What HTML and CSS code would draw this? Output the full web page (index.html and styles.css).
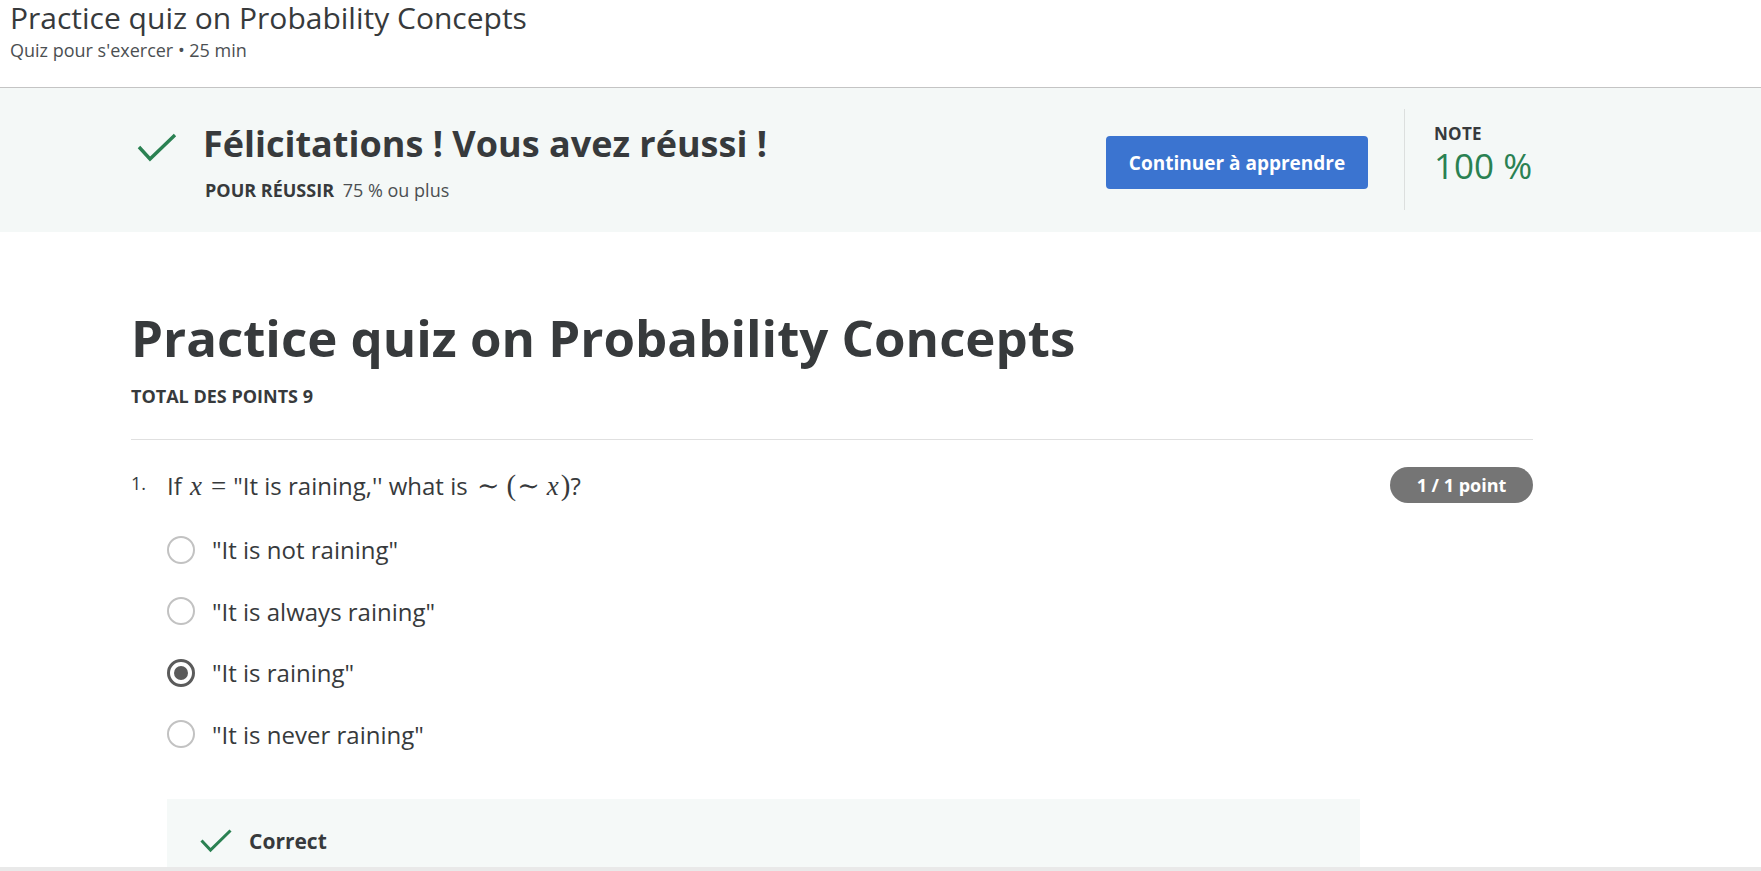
FILE: index.html
```html
<!DOCTYPE html>
<html lang="fr">
<head>
<meta charset="utf-8">
<title>Practice quiz on Probability Concepts</title>
<link rel="stylesheet" href="styles.css">
</head>
<body>
<header class="top">
  <h1 class="top-title">Practice quiz on Probability Concepts</h1>
  <p class="top-sub">Quiz pour s'exercer • 25 min</p>
</header>

<section class="banner">
  <div class="banner-inner">
    <svg class="banner-check" width="40" height="30" viewBox="0 0 40 30" aria-hidden="true">
      <path d="M2 14 L13 26 L38 2" fill="none" stroke="#2a8152" stroke-width="3.4"/>
    </svg>
    <div class="msg">
      <h2 class="msg-title">Félicitations ! Vous avez réussi !</h2>
      <p class="msg-sub"><span class="msg-label">POUR RÉUSSIR</span> 75 % ou plus</p>
    </div>
    <button class="btn-primary">Continuer à apprendre</button>
    <div class="vdivider"></div>
    <div class="grade">
      <div class="grade-label">NOTE</div>
      <div class="grade-value">100 %</div>
    </div>
  </div>
</section>

<main class="content">
  <h1 class="quiz-title">Practice quiz on Probability Concepts</h1>
  <p class="total">TOTAL DES POINTS 9</p>
  <hr class="rule">

  <div class="question">
    <span class="q-num">1.</span>
    <div class="q-text">If <span class="m"><i class="mi">x</i><span class="mo">=</span></span>"It is raining,'' what is <span class="m"><span class="mo tilde">∼</span><span class="mp">(</span><span class="mo tilde2">∼</span><i class="mi">x</i><span class="mp">)</span></span>?</div>
    <span class="badge">1 / 1 point</span>
  </div>

  <ul class="options">
    <li class="option"><span class="radio"></span><span class="opt-text">"It is not raining"</span></li>
    <li class="option"><span class="radio"></span><span class="opt-text">"It is always raining"</span></li>
    <li class="option"><span class="radio checked"></span><span class="opt-text">"It is raining"</span></li>
    <li class="option"><span class="radio"></span><span class="opt-text">"It is never raining"</span></li>
  </ul>

  <div class="feedback">
    <svg class="fb-check" width="32" height="24" viewBox="0 0 32 24" aria-hidden="true">
      <path d="M1.5 11.5 L10.5 21 L30.5 1.5" fill="none" stroke="#2a8152" stroke-width="3"/>
    </svg>
    <span class="fb-text">Correct</span>
  </div>
</main>

<div class="bottom-bar"></div>
</body>
</html>
```

FILE: styles.css
```css
* { box-sizing: border-box; }

html, body {
  margin: 0;
  padding: 0;
  background: #ffffff;
  color: #373a3c;
  font-family: "Open Sans", "Noto Sans", sans-serif;
  overflow: hidden;
}

.top {
  height: 88px;
  padding: 0 0 0 10px;
  border-bottom: 1px solid #c4c4c4;
}

.top-title {
  margin: 0;
  font-size: 30px;
  line-height: 36px;
  font-weight: 400;
  color: #373a3c;
}

.top-sub {
  margin: 2px 0 0;
  font-size: 18px;
  line-height: 24px;
  color: #4b4f52;
}

.banner {
  background: #f4f8f7;
  padding: 21px 0 22px 131px;
}

.banner-inner {
  width: 1402px;
  height: 101px;
  display: flex;
  align-items: flex-start;
}

.banner-check {
  margin: 24px 0 0 6px;
  flex: none;
}

.msg {
  margin: 13px 0 0 26px;
  flex: 1;
}

.msg-title {
  margin: 0;
  font-size: 36px;
  line-height: 44px;
  font-weight: 700;
  color: #373a3c;
}

.msg-sub {
  margin: 12px 0 0 2px;
  font-size: 18px;
  line-height: 24px;
  color: #4b4f52;
}

.msg-label {
  font-weight: 700;
  color: #373a3c;
  margin-right: 4px;
}

.btn-primary {
  margin-top: 27px;
  width: 262px;
  height: 53px;
  border: none;
  border-radius: 4px;
  background: #3b74d0;
  color: #ffffff;
  font-family: "Open Sans", "Noto Sans", sans-serif;
  font-size: 19px;
  font-weight: 700;
  padding: 0;
  flex: none;
}

.vdivider {
  width: 1px;
  height: 101px;
  background: #dcdfde;
  margin: 0 29px 0 36px;
  flex: none;
}

.grade {
  width: 99px;
  flex: none;
  margin-top: 13px;
  white-space: nowrap;
}

.grade-label {
  font-size: 17px;
  line-height: 24px;
  font-weight: 700;
  color: #373a3c;
  letter-spacing: 0.3px;
}

.grade-value {
  margin-top: 0;
  font-size: 35px;
  line-height: 40px;
  font-weight: 400;
  color: #2a8152;
}

.content {
  padding: 75px 0 0 131px;
  width: 1533px;
}

.quiz-title {
  margin: 0;
  font-size: 51px;
  line-height: 60px;
  font-weight: 700;
  color: #373a3c;
}

.total {
  margin: 18px 0 0;
  font-size: 18px;
  line-height: 22px;
  font-weight: 700;
  color: #373a3c;
}

.rule {
  margin: 32px 0 0;
  border: none;
  border-top: 1px solid #e0e0e0;
  height: 0;
}

.question {
  display: flex;
  align-items: center;
  margin-top: 27px;
  height: 36px;
}

.q-num {
  width: 36px;
  font-size: 18px;
  line-height: 24px;
  align-self: flex-start;
  margin-top: 4px;
  color: #373a3c;
}

.q-text {
  flex: 1;
  font-size: 24px;
  line-height: 32px;
  color: #373a3c;
}

.m {
  font-family: "Liberation Serif", "DejaVu Serif", serif;
  font-size: 27px;
}

.mi {
  font-style: italic;
  margin: 0 2px;
}

.mo {
  margin: 0 7px;
}

.tilde {
  margin: 0 7px 0 3px;
}

.tilde2 {
  margin: 0 5px 0 1px;
}

.mp {
  font-size: 29px;
}

.badge {
  flex: none;
  width: 143px;
  height: 36px;
  border-radius: 18px;
  background: #757575;
  color: #ffffff;
  font-size: 18px;
  font-weight: 700;
  display: flex;
  align-items: center;
  justify-content: center;
}

.options {
  list-style: none;
  margin: 16px 0 0 36px;
  padding: 0;
}

.option {
  display: flex;
  align-items: center;
  height: 61.5px;
}

.radio {
  width: 28px;
  height: 28px;
  border-radius: 50%;
  border: 2px solid #c2c2c2;
  flex: none;
  position: relative;
}

.radio.checked {
  border: 3px solid #5b5b5b;
}

.radio.checked::after {
  content: "";
  position: absolute;
  left: 4px;
  top: 4px;
  width: 14px;
  height: 14px;
  border-radius: 50%;
  background: #5b5b5b;
}

.opt-text {
  margin-left: 17px;
  font-size: 24px;
  color: #373a3c;
}

.feedback {
  margin: 34px 0 0 36px;
  width: 1193px;
  height: 100px;
  background: #f5f9f8;
  display: flex;
  align-items: flex-start;
  padding: 30px 0 0 33px;
}

.fb-check {
  flex: none;
}

.fb-text {
  margin-left: 17px;
  font-size: 21px;
  line-height: 24px;
  font-weight: 700;
  color: #373a3c;
}

.bottom-bar {
  position: fixed;
  left: 0;
  right: 0;
  bottom: 0;
  height: 4px;
  background: #e9e9e9;
}
```
